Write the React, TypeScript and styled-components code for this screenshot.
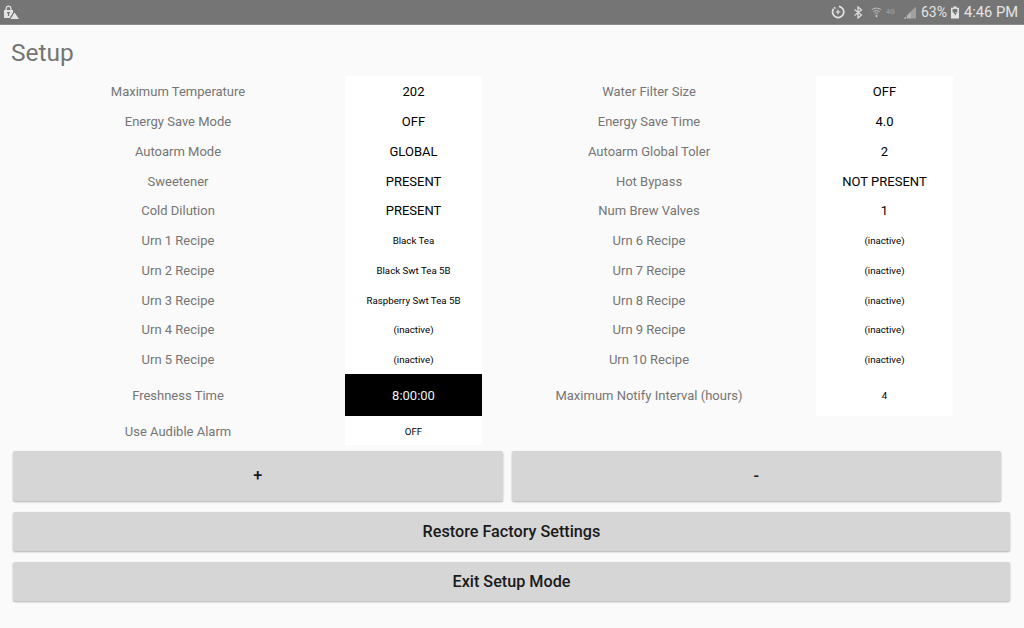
import React from "react";
import styled, { createGlobalStyle } from "styled-components";

const rows = [
  ["Maximum Temperature", "202", "Water Filter Size", "OFF"],
  ["Energy Save Mode", "OFF", "Energy Save Time", "4.0"],
  ["Autoarm Mode", "GLOBAL", "Autoarm Global Toler", "2"],
  ["Sweetener", "PRESENT", "Hot Bypass", "NOT PRESENT"],
  ["Cold Dilution", "PRESENT", "Num Brew Valves", "1"],
  ["Urn 1 Recipe", "Black Tea", "Urn 6 Recipe", "(inactive)"],
  ["Urn 2 Recipe", "Black Swt Tea 5B", "Urn 7 Recipe", "(inactive)"],
  ["Urn 3 Recipe", "Raspberry Swt Tea 5B", "Urn 8 Recipe", "(inactive)"],
  ["Urn 4 Recipe", "(inactive)", "Urn 9 Recipe", "(inactive)"],
  ["Urn 5 Recipe", "(inactive)", "Urn 10 Recipe", "(inactive)"],
];

function App() {
  return (
    <Page>
      <GlobalStyle />
      <StatusBar>
        <LockIcon />
        <StatusRight>
          <DataSaverIcon />
          <BluetoothIcon />
          <WifiIcon />
          <NetworkLabel>4G</NetworkLabel>
          <SignalIcon />
          <BatteryPercent>63%</BatteryPercent>
          <BatteryIcon />
          <Clock>4:46 PM</Clock>
        </StatusRight>
      </StatusBar>
      <Title>Setup</Title>
      <SettingsGrid>
        {rows.map((row, i) => (
          <React.Fragment key={row[0]}>
            <Label>{row[0]}</Label>
            <Value $small={i >= 5}>{row[1]}</Value>
            <Label>{row[2]}</Label>
            <Value $small={i >= 5}>{row[3]}</Value>
          </React.Fragment>
        ))}
        <Label>Freshness Time</Label>
        <Value $selected>8:00:00</Value>
        <Label>Maximum Notify Interval (hours)</Label>
        <Value $small>4</Value>
        <Label>Use Audible Alarm</Label>
        <Value $small>OFF</Value>
      </SettingsGrid>
      <ButtonRow>
        <ActionButton $height={50}>+</ActionButton>
        <ActionButton $height={50}>-</ActionButton>
      </ButtonRow>
      <WideButtons>
        <ActionButton $height={39}>Restore Factory Settings</ActionButton>
        <ActionButton $height={39}>Exit Setup Mode</ActionButton>
      </WideButtons>
    </Page>
  );
}

export default App;

function LockIcon() {
  return (
    <svg width="16" height="14" viewBox="0 0 16 14" fill="#e4e4e4">
      <path d="M1 5h1.500V3.600C2.500 1.800 3.800.6 5.500.6s3 1.200 3 3V5H10v2.400L6.600 13H1zM3.800 5h3.400V3.600c0-1-.7-1.800-1.700-1.800s-1.700.8-1.700 1.800z" />
      <path d="M11.500 7.500 16 14H7.500z" />
      <path d="M4 7h3v1.200H6.100V11H4.900V8.200H4z" fill="#757575" />
    </svg>
  );
}

function DataSaverIcon() {
  return (
    <Glyph width="14" height="14" viewBox="0 0 15 15" fill="none" stroke="#e4e4e4">
      <path d="M8.500 1.500a6 6 0 1 1-5.800 2.600" strokeWidth="1.800" />
      <path d="M3.200 2.600l1.800 1.100" strokeWidth="1.400" />
      <path d="M7.500 5v5M5 7.500h5" strokeWidth="1.300" />
    </Glyph>
  );
}

function BluetoothIcon() {
  return (
    <Glyph $left={8} width="10" height="13" viewBox="0 0 9 13" fill="none" stroke="#dcdcdc" strokeWidth="1.300">
      <path d="M1 3.500l7 5.500-3.500 3V1L8 4 1 9.500" />
    </Glyph>
  );
}

function WifiIcon() {
  return (
    <Glyph $left={8} width="11" height="13" viewBox="0 0 14 14" fill="none" stroke="#c8c8c8" strokeWidth="1.200">
      <path d="M1 3.500C4.500.8 9.500.8 13 3.500M3 6c2.500-1.900 5.500-1.900 8 0M4.800 8.300c1.400-1 3-1 4.400 0" />
      <path d="M7 10v3" strokeWidth="2" />
    </Glyph>
  );
}

function SignalIcon() {
  return (
    <Glyph $left={3} width="12" height="13" viewBox="0 0 13 13">
      <path d="M13 0v13H8V5z" fill="#a0a0a0" />
      <path d="M8 5v8H3v-3z" fill="#b4b4b4" />
      <path d="M0 13h2v-2z" fill="#e4e4e4" />
    </Glyph>
  );
}

function BatteryIcon() {
  return (
    <Glyph $left={4} width="8" height="15" viewBox="0 0 10 15">
      <path d="M3 0h4v1.500h3V15H0V1.500h3z" fill="#e4e4e4" />
      <path d="M2 3h6v4.500H2z" fill="#757575" />
      <path d="M5.500 5 3.500 9h2l-1 3.500L7 8H5z" fill="#555" />
    </Glyph>
  );
}

const GlobalStyle = createGlobalStyle`
  html, body {
    margin: 0;
    padding: 0;
    background: #fafafa;
  }

  body {
    font-family: Roboto, "Liberation Sans", sans-serif;
  }
`;

const Page = styled.div`
  width: 1024px;
  height: 628px;
  overflow: hidden;
  background: #fafafa;
`;

const StatusBar = styled.div`
  height: 25px;
  background: #757575;
  border-bottom: 1px solid #8e8e8e;
  box-sizing: border-box;
  padding: 0 6px 0 3px;
  display: flex;
  align-items: center;
  justify-content: space-between;
`;

const StatusRight = styled.div`
  display: flex;
  align-items: center;
`;

const Glyph = styled.svg<{ $left?: number }>`
  margin-left: ${(p) => p.$left ?? 0}px;
  flex: none;
`;

const BatteryPercent = styled.span`
  margin-left: 5px;
  font-size: 14px;
  color: #e4e4e4;
`;

const Clock = styled.span`
  margin-left: 5px;
  font-size: 14.700px;
  color: #e4e4e4;
`;

const NetworkLabel = styled.span`
  margin-left: 4px;
  width: 15px;
  font-size: 7px;
  font-weight: 700;
  color: #969696;
`;

const Title = styled.h1`
  margin: 0;
  padding: 13px 0 0 11px;
  height: 51px;
  box-sizing: border-box;
  font-size: 24.500px;
  line-height: 30px;
  font-weight: 400;
  color: #757575;
`;

const SettingsGrid = styled.div`
  display: grid;
  grid-template-columns: 334px 137px 334px 137px;
  grid-template-rows: repeat(10, 29.75px) 42px 29px;
  margin-left: 11px;
`;

const Label = styled.div`
  display: flex;
  align-items: center;
  justify-content: center;
  padding-top: 2px;
  box-sizing: border-box;
  font-size: 13px;
  color: #757575;
`;

const Value = styled.div<{ $small?: boolean; $selected?: boolean }>`
  display: flex;
  align-items: center;
  justify-content: center;
  padding-top: 2px;
  box-sizing: border-box;
  font-size: ${(p) => (p.$small ? "9.700px" : "13px")};
  color: ${(p) => (p.$selected ? "#f2f2f2" : "#000")};
  background: ${(p) => (p.$selected ? "#000" : "#fff")};
`;

const ButtonRow = styled.div`
  display: flex;
  gap: 9px;
  margin: 6px 23px 0 13px;
`;

const WideButtons = styled.div`
  display: flex;
  flex-direction: column;
  gap: 11px;
  margin: 11px 14px 0 13px;
`;

const ActionButton = styled.button<{ $height: number }>`
  flex: 1 1 0;
  min-height: ${(p) => p.$height}px;
  border: none;
  border-radius: 2px;
  padding: 0;
  background: #d6d6d6;
  box-shadow: 0 1px 2px rgba(0, 0, 0, 0.3);
  font-family: inherit;
  font-size: 16.200px;
  font-weight: 500;
  color: #1a1a1a;
`;
